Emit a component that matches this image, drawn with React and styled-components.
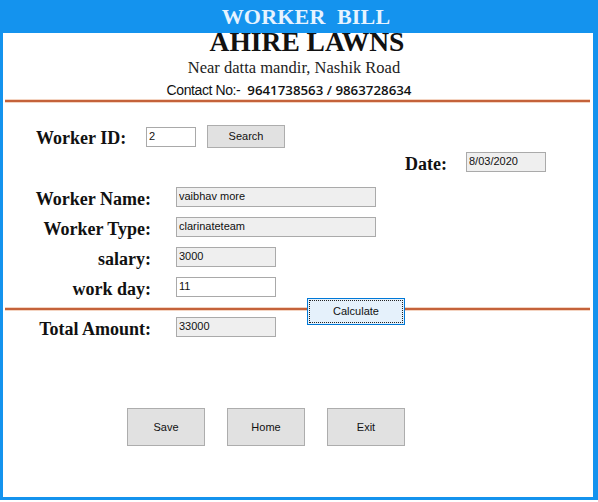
import React from "react";
import styled, { createGlobalStyle } from "styled-components";

const Global = createGlobalStyle`
  html, body { margin: 0; padding: 0; background: #ffffff; }
  * { box-sizing: border-box; }
`;

const BLUE = "#1493ee";

const Window = styled.div`
  width: 598px;
  height: 500px;
  border-left: 3px solid ${BLUE};
  border-right: 5px solid ${BLUE};
  border-bottom: 3px solid ${BLUE};
  background: #ffffff;
  display: flex;
  flex-direction: column;
`;

const Header = styled.div`
  height: 33px;
  background: ${BLUE};
  display: flex;
  align-items: center;
  justify-content: center;
  padding-left: 16px;
`;

const Title = styled.h1`
  margin: 0;
  font-family: "Liberation Serif", "Times New Roman", serif;
  font-weight: 700;
  font-size: 22px;
  color: #e6f3ff;
  white-space: pre;
  letter-spacing: 0.2px;
`;

const Line = styled.div`
  text-align: center;
  white-space: pre;
  padding-left: ${(p) => Math.max(0, (p.$shift || 0) * 2)}px;
  padding-right: ${(p) => Math.max(0, -(p.$shift || 0) * 2)}px;
`;

const Company = styled(Line)`
  margin-top: -2px;
  font-family: "Liberation Serif", "Times New Roman", serif;
  font-weight: 700;
  font-size: 27.5px;
  line-height: 22px;
  color: #111;
`;

const Address = styled(Line)`
  margin-top: 5px;
  font-family: "Liberation Serif", "Times New Roman", serif;
  font-size: 16.5px;
  line-height: 20px;
  color: #222;
`;

const Contact = styled(Line)`
  margin-top: 3px;
  line-height: 18px;
  color: #111;
`;

const ContactLabel = styled.span`
  font-family: "Liberation Sans", Arial, sans-serif;
  font-size: 14px;
  letter-spacing: -0.4px;
`;

const ContactNums = styled.span`
  font-family: "Open Sans", "Liberation Sans", sans-serif;
  font-weight: 600;
  font-size: 13.3px;
`;

const Divider = styled.div`
  position: relative;
  height: 2px;
  margin: ${(p) => p.$top || 0}px 3px 0 2px;
  background: #c4623a;
  box-shadow: 0 1px 0 #f4d4c2, 0 -1px 0 #f4d4c2;
`;

const Label = styled.label`
  font-family: "Liberation Serif", "Times New Roman", serif;
  font-weight: 700;
  font-size: 18px;
  color: #111;
  white-space: nowrap;
  padding-top: 4px;
  justify-self: end;
`;

const Input = styled.input`
  width: ${(p) => p.$w}px;
  height: 20px;
  padding: 0 0 2px 2px;
  border: 1px solid ${(p) => (p.readOnly ? "#aaaaaa" : "#a9a9a9")};
  background: ${(p) => (p.readOnly ? "#efefef" : "#ffffff")};
  font-family: "Liberation Sans", Arial, sans-serif;
  font-size: 11px;
  color: #111;
  outline: none;
`;

const Button = styled.button`
  width: ${(p) => p.$w}px;
  height: ${(p) => p.$h}px;
  padding: 0 0 1px;
  background: #e1e1e1;
  border: 1px solid #adadad;
  font-family: "Liberation Sans", Arial, sans-serif;
  font-size: 11px;
  color: #111;
`;

const FocusButton = styled(Button)`
  position: absolute;
  left: ${(p) => p.$left}px;
  top: -10px;
  background: #e5f1fb;
  border: 1px solid #0078d7;
  outline: 1px dotted #222;
  outline-offset: -3px;
`;

const IdRow = styled.div`
  display: flex;
  align-items: center;
  margin-top: 23px;
  padding-left: 33px;
  height: 23px;
`;

const IdLabel = styled(Label)`
  width: 110px;
  padding-top: 4px;
`;

const DateRow = styled.div`
  display: flex;
  align-items: center;
  margin-top: 4px;
  padding-left: 402px;
  height: 20px;
  gap: 19px;
`;

const FieldGrid = styled.div`
  display: grid;
  grid-template-columns: 148px auto;
  column-gap: 25px;
  row-gap: 10px;
  grid-auto-rows: 20px;
  align-items: center;
  justify-items: start;
  margin-top: ${(p) => p.$top}px;
`;

const ActionRow = styled.div`
  display: flex;
  gap: 22px;
  margin-top: 71px;
  padding-left: 124px;
`;

export default function App() {
  return (
    <>
      <Global />
      <Window>
        <Header>
          <Title>{"WORKER  BILL"}</Title>
        </Header>
        <Company $shift={9}>AHIRE LAWNS</Company>
        <Address $shift={-4}>Near datta mandir, Nashik Road</Address>
        <Contact $shift={-9}>
          <ContactLabel>Contact No:- </ContactLabel>
          <ContactNums> 9641738563 / 9863728634</ContactNums>
        </Contact>
        <Divider $top={1} />

        <IdRow>
          <IdLabel>Worker ID:</IdLabel>
          <Input $w={50} defaultValue="2" />
          <Button $w={78} $h={23} style={{ marginLeft: 11 }}>Search</Button>
        </IdRow>

        <DateRow>
          <Label>Date:</Label>
          <Input $w={80} readOnly defaultValue="8/03/2020" />
        </DateRow>

        <FieldGrid $top={15}>
          <Label>Worker Name:</Label>
          <Input $w={200} readOnly defaultValue="vaibhav more" />
          <Label>Worker Type:</Label>
          <Input $w={200} readOnly defaultValue="clarinateteam" />
          <Label>salary:</Label>
          <Input $w={100} readOnly defaultValue="3000" />
          <Label>work day:</Label>
          <Input $w={100} defaultValue="11" />
        </FieldGrid>

        <Divider $top={11}>
          <FocusButton $w={98} $h={27} $left={302}>Calculate</FocusButton>
        </Divider>

        <FieldGrid $top={7}>
          <Label>Total Amount:</Label>
          <Input $w={100} readOnly defaultValue="33000" />
        </FieldGrid>

        <ActionRow>
          <Button $w={78} $h={38}>Save</Button>
          <Button $w={78} $h={38}>Home</Button>
          <Button $w={78} $h={38}>Exit</Button>
        </ActionRow>
      </Window>
    </>
  );
}
